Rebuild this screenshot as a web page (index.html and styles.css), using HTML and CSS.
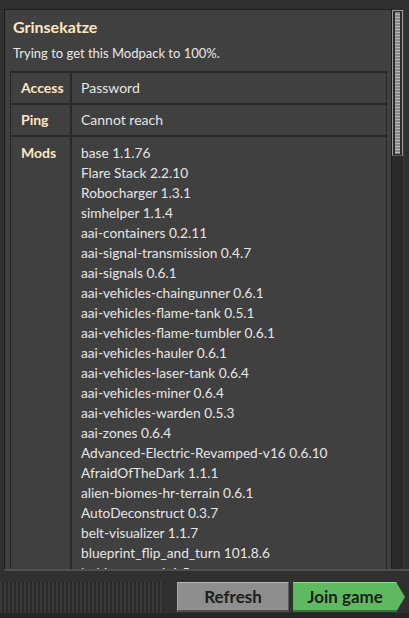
FILE: index.html
```html
<!DOCTYPE html>
<html>
<head>
<meta charset="utf-8">
<link rel="stylesheet" href="styles.css">
</head>
<body>
<div class="frame">
  <div class="content">
    <div class="panel">
      <div class="title">Grinsekatze</div>
      <div class="desc">Trying to get this Modpack to 100%.</div>
      <div class="table">
        <div class="row">
          <div class="label">Access</div>
          <div class="value">Password</div>
        </div>
        <div class="row">
          <div class="label">Ping</div>
          <div class="value">Cannot reach</div>
        </div>
        <div class="row mods">
          <div class="label">Mods</div>
          <div class="value list">
            <div>base 1.1.76</div>
            <div>Flare Stack 2.2.10</div>
            <div>Robocharger 1.3.1</div>
            <div>simhelper 1.1.4</div>
            <div>aai-containers 0.2.11</div>
            <div>aai-signal-transmission 0.4.7</div>
            <div>aai-signals 0.6.1</div>
            <div>aai-vehicles-chaingunner 0.6.1</div>
            <div>aai-vehicles-flame-tank 0.5.1</div>
            <div>aai-vehicles-flame-tumbler 0.6.1</div>
            <div>aai-vehicles-hauler 0.6.1</div>
            <div>aai-vehicles-laser-tank 0.6.4</div>
            <div>aai-vehicles-miner 0.6.4</div>
            <div>aai-vehicles-warden 0.5.3</div>
            <div>aai-zones 0.6.4</div>
            <div>Advanced-Electric-Revamped-v16 0.6.10</div>
            <div>AfraidOfTheDark 1.1.1</div>
            <div>alien-biomes-hr-terrain 0.6.1</div>
            <div>AutoDeconstruct 0.3.7</div>
            <div>belt-visualizer 1.1.7</div>
            <div>blueprint_flip_and_turn 101.8.6</div>
            <div>bobinserters 1.1.5</div>
          </div>
        </div>
      </div>
    </div>
    <div class="scrollbar">
      <div class="thumb"></div>
    </div>
  </div>
  <div class="footer">
    <div class="hatch"></div>
    <button class="btn refresh">Refresh</button>
    <button class="btn join">Join game</button>
  </div>
</div>
</body>
</html>
```

FILE: styles.css
```css
html, body {
  margin: 0;
  padding: 0;
}
body {
  width: 409px;
  height: 618px;
  overflow: hidden;
  background: #313031;
  font-family: "Lato", "Open Sans", sans-serif;
  font-size: 14px;
  color: #e6e6e6;
}
.frame {
  display: flex;
  flex-direction: column;
  height: 618px;
  padding-top: 9px;
  box-sizing: border-box;
}
.content {
  display: flex;
  height: 560px;
  margin-left: 4px;
  border-bottom: 2px solid #4f4f4f;
}
.panel {
  flex: 1;
  background: #404040;
  border-top: 1px solid #1c1c1c;
  border-left: 1px solid #1c1c1c;
  border-right: 1px solid #1c1c1c;
  padding: 8px 4px 0 5px;
  overflow: hidden;
}
.title {
  font-weight: 700;
  font-size: 16px;
  color: #ffe6c0;
  line-height: 18px;
  padding-left: 3px;
}
.desc {
  font-size: 13px;
  line-height: 18px;
  margin-top: 8px;
  padding-left: 3px;
  color: #e8e8e8;
}
.table {
  margin-top: 9px;
  border-left: 1px solid #262626;
  border-right: 1px solid #262626;
}
.row {
  display: flex;
  height: 32px;
  border-top: 2px solid #2a2a2a;
  box-sizing: border-box;
}
.row .label {
  width: 61px;
  flex: none;
  box-sizing: border-box;
  padding-left: 10px;
  font-weight: 700;
  color: #ffe6c0;
  line-height: 30px;
  border-right: 2px solid #2a2a2a;
}
.row .value {
  flex: 1;
  padding-left: 9px;
  line-height: 30px;
}
.row.mods {
  height: auto;
}
.row.mods .label,
.row.mods .value {
  line-height: 20px;
  padding-top: 6px;
}
.list {
  font-size: 13.7px;
}
.scrollbar {
  width: 11px;
  background: #2a2a2a;
  margin-top: 1px;
  margin-right: 5px;
  border-right: 1px solid #3a3a3a;
}
.thumb {
  height: 146px;
  box-sizing: border-box;
  border: 1px solid #9a9a9a;
  border-bottom-color: #5a5a5a;
  background: repeating-linear-gradient(to bottom, #b4b4b4 0, #b4b4b4 1px, #878787 1px, #878787 3px);
  background-clip: content-box;
  padding: 1px 2px;
  background-color: #8a8a8a;
}
.footer {
  display: flex;
  align-items: flex-start;
  padding-top: 11px;
  flex: 1;
  background: linear-gradient(to bottom, #313031 0, #313031 42px, #262626 42px);
}
.hatch {
  width: 163px;
  height: 31px;
  background: repeating-linear-gradient(to right, #3a3a3a 0, #3a3a3a 2px, #2a2a2a 2px, #2a2a2a 4px);
  margin-right: 14px;
}
.btn {
  height: 30px;
  border: none;
  padding: 0;
  font-family: "Lato", "Open Sans", sans-serif;
  font-weight: 700;
  font-size: 17px;
  color: #1e1e1e;
  box-sizing: border-box;
}
.refresh {
  width: 112px;
  background: #8e8e8e;
  border-top: 1px solid #b8b8b8;
  border-left: 1px solid #a8a8a8;
  border-bottom: 2px solid #4e4e4e;
  border-right: 1px solid #5a5a5a;
  margin-right: 4px;
}
.join {
  width: 112px;
  background: #5eba60;
  clip-path: polygon(0 0, 92% 0, 100% 50%, 92% 100%, 0 100%);
  border-top: 1px solid #8ed88f;
  border-bottom: 2px solid #2f7a33;
  padding-right: 8px;
}
```
